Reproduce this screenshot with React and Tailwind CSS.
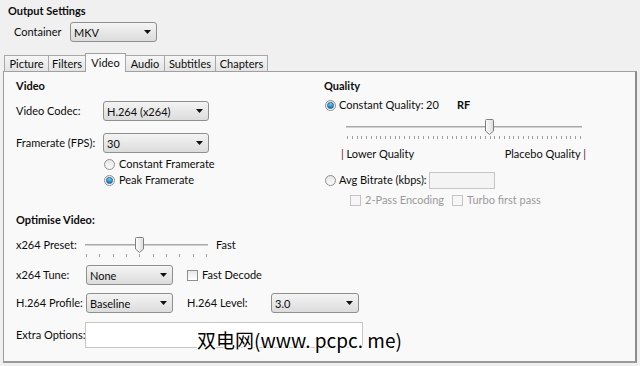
import React from 'react';

const Dropdown = ({ value, className = '' }) => (
    <div className={`flex items-center justify-between h-[20px] rounded-[3px] border border-[#8e8f8f] bg-gradient-to-b from-[#f4f4f4] to-[#dcdcdc] pl-[3px] pr-[5px] shrink-0 ${className}`}>
        <span className="leading-none">{value}</span>
        <svg width="7" height="4" viewBox="0 0 7 4"><path d="M0 0h7L3.5 4z" fill="#111" /></svg>
    </div>
);

const Radio = ({ checked }) => (
    <div className="w-[11px] h-[11px] rounded-full border border-[#8e8f8f] bg-gradient-to-b from-[#e6e6e6] to-[#fafafa] flex items-center justify-center shrink-0">
        {checked && <div className="w-[7px] h-[7px] rounded-full bg-gradient-to-b from-[#7fd0f5] to-[#1677b8] border border-[#0d5f96]" />}
    </div>
);

const Checkbox = ({ disabled }) => (
    <div className={`w-[11px] h-[11px] border ${disabled ? 'border-[#c4c4c4] bg-[#f6f6f6]' : 'border-[#8e8f8f] bg-gradient-to-b from-[#e8e8e8] to-[#ffffff]'} shrink-0`} />
);

const Thumb = () => (
    <svg width="9" height="16" viewBox="0 0 9 16" className="block shrink-0">
        <defs>
            <linearGradient id="tg" x1="0" y1="0" x2="1" y2="0">
                <stop offset="0" stopColor="#fdfdfd" />
                <stop offset="1" stopColor="#dcdcdc" />
            </linearGradient>
        </defs>
        <path d="M0.5 1.5Q0.5 0.5 1.5 0.5H7.5Q8.5 0.5 8.5 1.5V12L4.5 15.5L0.5 12Z" fill="url(#tg)" stroke="#7f7f7f" />
    </svg>
);

const Slider = ({ width, thumbAt, ticks }) => (
    <div className="flex flex-col shrink-0" style={{ width }}>
        <div className="flex items-center h-[16px]">
            <div className="h-[2px] bg-[#d0d0d0] border-t border-[#a8a8a8]" style={{ width: thumbAt }} />
            <Thumb />
            <div className="h-[2px] bg-[#d0d0d0] border-t border-[#a8a8a8] flex-1" />
        </div>
        <div className="flex justify-between px-[1px] h-[3px] mt-[1px]">
            {Array.from({ length: ticks }).map((_, i) => (
                <div key={i} className="w-[1px] h-[3px] bg-[#a0a0a0]" />
            ))}
        </div>
    </div>
);

const tabs = ['Picture', 'Filters', 'Video', 'Audio', 'Subtitles', 'Chapters'];
const tabWidths = [45, 38, 41, 40, 52, 53];

export default function App() {
    return (
        <div className="relative w-[640px] h-[366px] bg-[#f0f0f0] overflow-hidden text-[11px] leading-[14px] text-[#0c0c0c] whitespace-nowrap" style={{ fontFamily: 'Lato, "Noto Sans", sans-serif' }}>
            <div className="pl-[8px] pt-[4px] font-bold h-[18px]">Output Settings</div>
            <div className="flex items-center mt-[4px] pl-[14px] h-[20px]">
                <span className="w-[56px] shrink-0">Container</span>
                <Dropdown value="MKV" className="w-[87px]" />
            </div>

            <div className="flex items-end pl-[4px] mt-[12px] h-[17px] relative z-10">
                {tabs.map((t, i) =>
                    t === 'Video' ? (
                        <div key={t} className="h-[19px] border border-b-0 border-[#a0a0a0] bg-[#f9f9f9] flex items-center justify-center -mb-[1px] pb-[1px] -ml-[1px] shrink-0" style={{ width: tabWidths[i] }}>
                            {t}
                        </div>
                    ) : (
                        <div key={t} className="h-[16px] border border-b-0 border-[#a8a8a8] -ml-[1px] first:ml-0 bg-gradient-to-b from-[#f6f6f6] to-[#e3e3e3] flex items-center justify-center shrink-0" style={{ width: tabWidths[i] }}>
                            {t}
                        </div>
                    )
                )}
            </div>

            <div className="mx-[3px] h-[292px] border border-[#a0a0a0] border-r-[#8c8c8c] border-r-2 border-b-2 border-b-[#9a9a9a] bg-[#f9f9f9] flex">
                <div className="w-[308px] shrink-0 pl-[12px] flex flex-col">
                    <div className="font-bold mt-[7px] h-[14px]">Video</div>
                    <div className="flex items-center mt-[8px] h-[20px]">
                        <span className="w-[87px] shrink-0">Video Codec:</span>
                        <Dropdown value="H.264 (x264)" className="w-[106px]" />
                    </div>
                    <div className="flex items-center mt-[12px] h-[20px]">
                        <span className="w-[87px] shrink-0">Framerate (FPS):</span>
                        <Dropdown value="30" className="w-[106px]" />
                    </div>
                    <div className="flex items-center gap-[4px] mt-[3px] pl-[88px] h-[16px]">
                        <Radio />
                        <span>Constant Framerate</span>
                    </div>
                    <div className="flex items-center gap-[4px] pl-[88px] h-[16px]">
                        <Radio checked />
                        <span>Peak Framerate</span>
                    </div>

                    <div className="font-bold mt-[25px] h-[14px]">Optimise Video:</div>
                    <div className="flex items-center mt-[8px] h-[20px]">
                        <span className="w-[69px] shrink-0">x264 Preset:</span>
                        <div className="mt-[4px] shrink-0">
                            <Slider width={123} thumbAt={50} ticks={10} />
                        </div>
                        <span className="ml-[8px]">Fast</span>
                    </div>
                    <div className="flex items-center mt-[10px] h-[20px]">
                        <span className="w-[70px] shrink-0">x264 Tune:</span>
                        <Dropdown value="None" className="w-[87px]" />
                        <div className="ml-[14px] flex items-center gap-[4px] shrink-0">
                            <Checkbox />
                            <span>Fast Decode</span>
                        </div>
                    </div>
                    <div className="flex items-center mt-[8px] h-[20px]">
                        <span className="w-[70px] shrink-0">H.264 Profile:</span>
                        <Dropdown value="Baseline" className="w-[87px]" />
                        <span className="ml-[14px] w-[84px] shrink-0">H.264 Level:</span>
                        <Dropdown value="3.0" className="w-[88px]" />
                    </div>
                    <div className="flex items-center mt-[9px] h-[26px]">
                        <span className="w-[69px] shrink-0">Extra Options:</span>
                        <div className="w-[278px] h-[26px] shrink-0 border border-[#c6c6c6] bg-white" />
                    </div>
                </div>

                <div className="ml-[12px] flex flex-col">
                    <div className="font-bold mt-[7px] h-[14px]">Quality</div>
                    <div className="flex items-center mt-[4px] h-[16px] pl-[1px]">
                        <Radio checked />
                        <span className="ml-[3px] w-[87px] shrink-0">Constant Quality:</span>
                        <span className="w-[31px] shrink-0">20</span>
                        <span className="font-bold">RF</span>
                    </div>
                    <div className="pl-[22px] mt-[6px]">
                        <Slider width={236} thumbAt={139} ticks={50} />
                    </div>
                    <div className="flex justify-between w-[262px] pl-[17px] mt-[8px] h-[14px]">
                        <span><span className="text-[#7a1030]">|</span> Lower Quality</span>
                        <span>Placebo Quality <span className="text-[#7a1030]">|</span></span>
                    </div>
                    <div className="flex items-center mt-[9px] pl-[1px] h-[20px]">
                        <Radio />
                        <span className="ml-[3px] w-[90px] shrink-0">Avg Bitrate (kbps):</span>
                        <div className="w-[66px] h-[17px] shrink-0 border border-[#c6c6c6] bg-[#f4f4f4]" />
                    </div>
                    <div className="flex items-center mt-[3px] pl-[26px] h-[14px] text-[#9a9a9a]">
                        <Checkbox disabled />
                        <span className="ml-[4px]">2-Pass Encoding</span>
                        <div className="ml-[8px]"><Checkbox disabled /></div>
                        <span className="ml-[4px]">Turbo first pass</span>
                    </div>
                </div>
            </div>

            <div className="absolute left-[197px] top-[328px] text-[19px] leading-[24px] text-black" style={{ fontFamily: '"Noto Sans CJK SC", sans-serif', textShadow: '1px 1px 0 #fff, -1px -1px 0 #fff, 1px -1px 0 #fff, -1px 1px 0 #fff' }}>
                双电网(www. pcpc. me)
            </div>
        </div>
    );
}
